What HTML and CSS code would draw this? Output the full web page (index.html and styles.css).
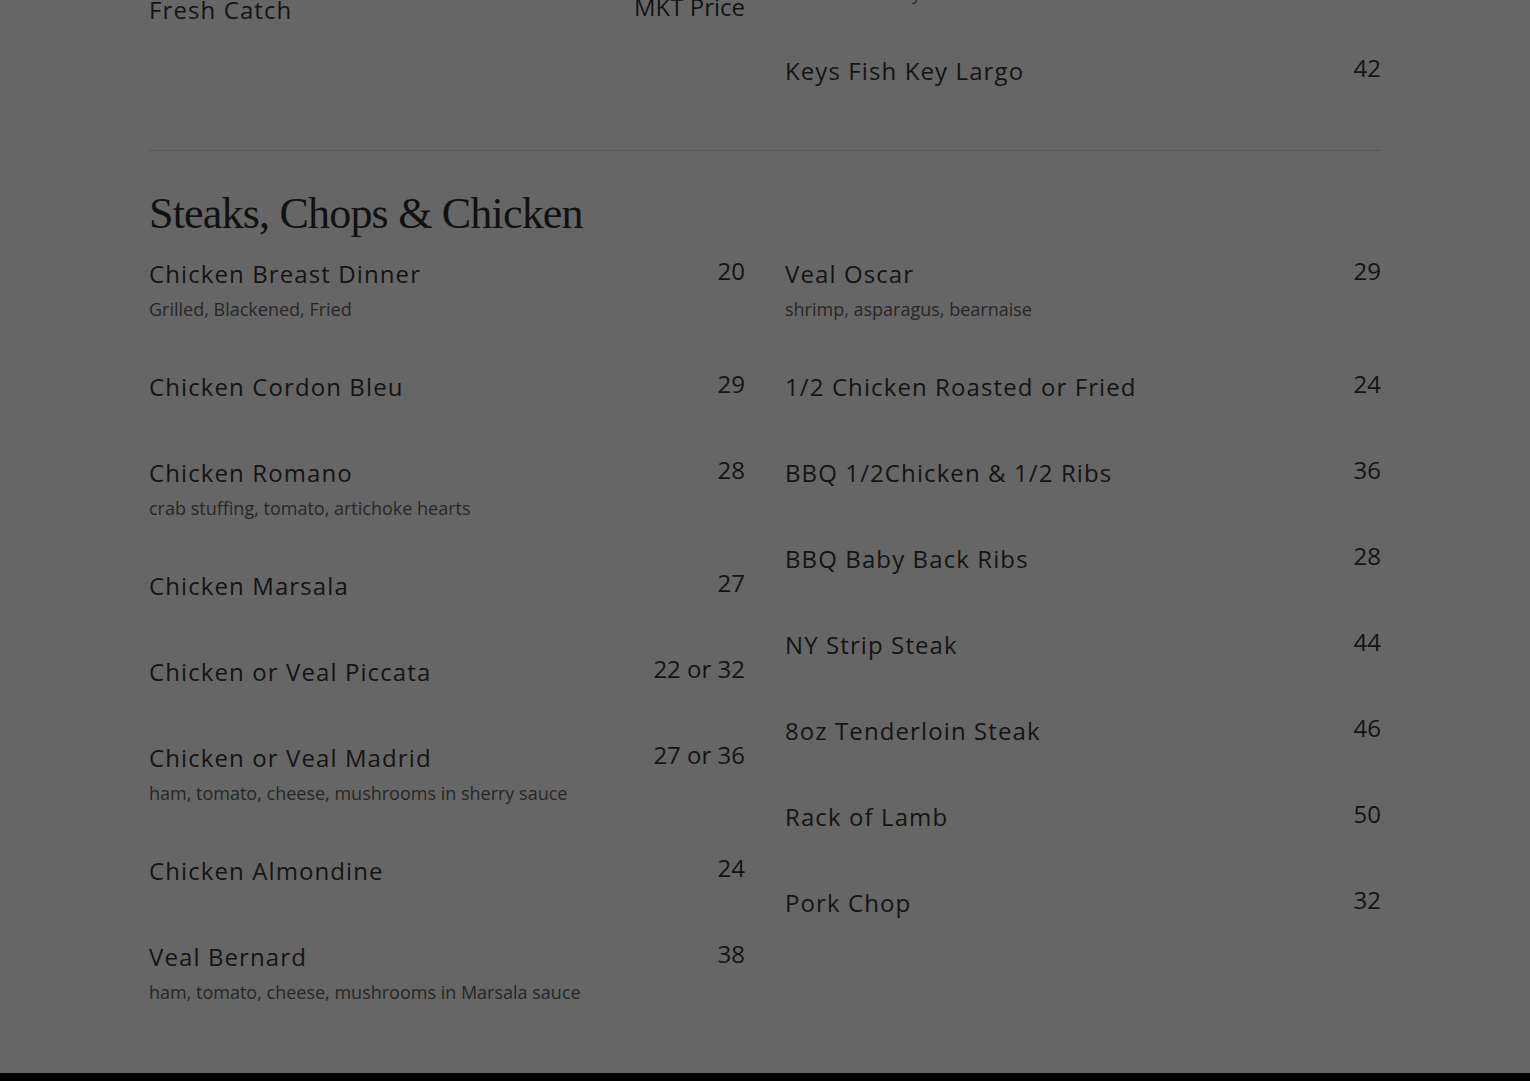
FILE: index.html
```html
<!DOCTYPE html>
<html lang="en">
<head>
<meta charset="utf-8">
<title>Menu</title>
<link rel="stylesheet" href="styles.css">
</head>
<body>
<main class="page">
  <section class="menu-section menu-section--prev">
    <div class="cols">
      <div class="col col--offset">
        <div class="item">
          <div class="item-head"><span class="item-name">Fresh Catch</span><span class="item-price">MKT Price</span></div>
        </div>
      </div>
      <div class="col">
        <div class="item">
          <div class="item-head"><span class="item-name">Snapper Rosemary</span><span class="item-price">38</span></div>
          <p class="item-desc">bacon rosemary cream</p>
        </div>
        <div class="item">
          <div class="item-head"><span class="item-name">Keys Fish Key Largo</span><span class="item-price">42</span></div>
        </div>
      </div>
    </div>
  </section>

  <hr class="divider">

  <section class="menu-section">
    <h2 class="section-title">Steaks, Chops &amp; Chicken</h2>
    <div class="cols">
      <div class="col">
        <div class="item">
          <div class="item-head"><span class="item-name">Chicken Breast Dinner</span><span class="item-price">20</span></div>
          <p class="item-desc">Grilled, Blackened, Fried</p>
        </div>
        <div class="item">
          <div class="item-head"><span class="item-name">Chicken Cordon Bleu</span><span class="item-price">29</span></div>
        </div>
        <div class="item">
          <div class="item-head"><span class="item-name">Chicken Romano</span><span class="item-price">28</span></div>
          <p class="item-desc">crab stuffing, tomato, artichoke hearts</p>
        </div>
        <div class="item">
          <div class="item-head"><span class="item-name">Chicken Marsala</span><span class="item-price">27</span></div>
        </div>
        <div class="item">
          <div class="item-head"><span class="item-name">Chicken or Veal Piccata</span><span class="item-price">22 or 32</span></div>
        </div>
        <div class="item">
          <div class="item-head"><span class="item-name">Chicken or Veal Madrid</span><span class="item-price">27 or 36</span></div>
          <p class="item-desc">ham, tomato, cheese, mushrooms in sherry sauce</p>
        </div>
        <div class="item">
          <div class="item-head"><span class="item-name">Chicken Almondine</span><span class="item-price">24</span></div>
        </div>
        <div class="item">
          <div class="item-head"><span class="item-name">Veal Bernard</span><span class="item-price">38</span></div>
          <p class="item-desc">ham, tomato, cheese, mushrooms in Marsala sauce</p>
        </div>
      </div>
      <div class="col">
        <div class="item">
          <div class="item-head"><span class="item-name">Veal Oscar</span><span class="item-price">29</span></div>
          <p class="item-desc">shrimp, asparagus, bearnaise</p>
        </div>
        <div class="item">
          <div class="item-head"><span class="item-name">1/2 Chicken Roasted or Fried</span><span class="item-price">24</span></div>
        </div>
        <div class="item">
          <div class="item-head"><span class="item-name">BBQ 1/2Chicken &amp; 1/2 Ribs</span><span class="item-price">36</span></div>
        </div>
        <div class="item">
          <div class="item-head"><span class="item-name">BBQ Baby Back Ribs</span><span class="item-price">28</span></div>
        </div>
        <div class="item">
          <div class="item-head"><span class="item-name">NY Strip Steak</span><span class="item-price">44</span></div>
        </div>
        <div class="item">
          <div class="item-head"><span class="item-name">8oz Tenderloin Steak</span><span class="item-price">46</span></div>
        </div>
        <div class="item">
          <div class="item-head"><span class="item-name">Rack of Lamb</span><span class="item-price">50</span></div>
        </div>
        <div class="item">
          <div class="item-head"><span class="item-name">Pork Chop</span><span class="item-price">32</span></div>
        </div>
      </div>
    </div>
  </section>
</main>
<footer class="footer"></footer>
</body>
</html>
```

FILE: styles.css
```css
html, body {
  margin: 0;
  padding: 0;
}

body {
  background: #666666;
  color: #161616;
  font-family: "Open Sans", "Noto Sans", sans-serif;
  overflow: hidden;
  height: 1081px;
}

.page {
  width: 1232px;
  margin: -59px auto 0;
  display: flow-root;
}

.cols {
  display: grid;
  grid-template-columns: 1fr 1fr;
  column-gap: 40px;
  align-items: start;
}

.col {
  display: flex;
  flex-direction: column;
}

.col--offset {
  padding-top: 52px;
}

.item {
  display: flex;
  flex-direction: column;
  padding-bottom: 47px;
}

.item-head {
  display: flex;
  justify-content: space-between;
  align-items: flex-start;
  padding-bottom: 6px;
}

.item-name {
  font-size: 24px;
  line-height: 33px;
  letter-spacing: 1.1px;
  color: #141414;
}

.item-price {
  font-size: 24px;
  line-height: 27px;
  color: #141414;
  white-space: nowrap;
}

.item-desc {
  margin: 0;
  font-size: 18px;
  line-height: 27px;
  color: #262626;
}

.menu-section {
  display: flow-root;
}

.menu-section--prev .cols {
  padding-bottom: 10px;
}

.divider {
  margin: 0;
  border: 0;
  height: 1px;
  background: #5a5a5a;
}

.section-title {
  margin: 35px 0 15px;
  font-family: "Liberation Serif", "DejaVu Serif", serif;
  font-weight: 400;
  font-size: 44px;
  line-height: 56px;
  letter-spacing: -0.8px;
  color: #111111;
}

.menu-section:last-child {
  padding-bottom: 20px;
}

.footer {
  background: #000000;
  height: 60px;
}
```
